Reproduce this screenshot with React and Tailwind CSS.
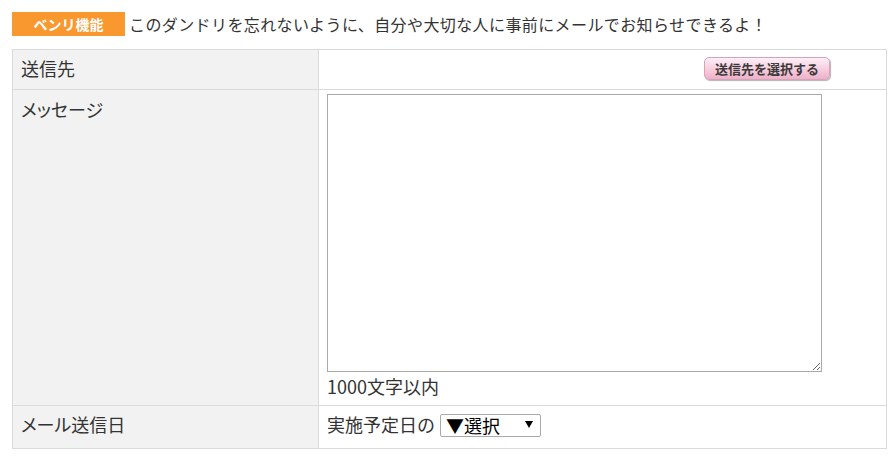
import React from "react";

export default function App() {
  return (
    <div className="w-[895px] h-[457px] bg-white text-[#333] font-['Noto_Sans_CJK_JP','Noto_Sans',sans-serif]">
      <div className="flex items-center pt-[12px] pl-[12px]">
        <span className="flex h-[24px] w-[113px] items-center justify-center bg-[#f8982f] text-[14px] font-bold leading-none text-white">
          ベンリ機能
        </span>
        <span className="ml-[4px] text-[16px] leading-[24px] tracking-[0.4px] text-[#333]">
          このダンドリを忘れないように、自分や大切な人に事前にメールでお知らせできるよ！
        </span>
      </div>

      <div className="ml-[12px] mt-[13px] grid w-[875px] grid-cols-[306px_568px] border-l border-t border-[#dadada]">
        {/* Row 1 */}
        <div className="flex h-[40px] items-center border-b border-r border-[#dadada] bg-[#f2f2f2] pb-[3px] pl-[8px] text-[18px] [font-feature-settings:'palt']">
          送信先
        </div>
        <div className="flex h-[40px] items-center justify-end border-b border-r border-[#dadada] pb-[2px] pr-[56px]">
          <button className="h-[23px] w-[126px] rounded-[5px] border border-[#d7a3b8] bg-gradient-to-b from-[#fdf0f5] via-[#f8d0e0] to-[#eeb0c8] text-[13px] font-bold leading-none text-[#3a3a3a] shadow-[1px_1px_1px_rgba(0,0,0,0.3)]">
            送信先を選択する
          </button>
        </div>

        {/* Row 2 */}
        <div className="h-[316px] border-b border-r border-[#dadada] bg-[#f2f2f2] pl-[8px] pt-[7px] text-[18px] leading-[24px] [font-feature-settings:'palt']">
          メッセージ
        </div>
        <div className="h-[316px] border-b border-r border-[#dadada] pl-[8px] pt-[4px]">
          <textarea className="block h-[278px] w-[495px] border border-[#a9a9a9] bg-white outline-none" />
          <div className="mt-[2px] text-[18px] leading-[24px] text-[#333]">1000文字以内</div>
        </div>

        {/* Row 3 */}
        <div className="flex h-[43px] items-center border-b border-r border-[#dadada] bg-[#f2f2f2] pb-[6px] pl-[8px] text-[18px] [font-feature-settings:'palt']">
          メール送信日
        </div>
        <div className="flex h-[43px] items-center border-b border-r border-[#dadada] pb-[6px] pl-[8px] text-[18px] leading-[24px]">
          <span>実施予定日の</span>
          <div className="relative ml-[5px] h-[23px] w-[101px]">
            <select className="h-full w-full appearance-none rounded-[2px] border border-[#a9a9a9] bg-white pl-[5px] text-[18px] leading-[21px] text-black outline-none">
              <option>▼選択</option>
            </select>
            <span className="pointer-events-none absolute right-[8px] top-[8px] h-0 w-0 border-l-[4px] border-r-[4px] border-t-[7px] border-l-transparent border-r-transparent border-t-black" />
          </div>
        </div>
      </div>
    </div>
  );
}
